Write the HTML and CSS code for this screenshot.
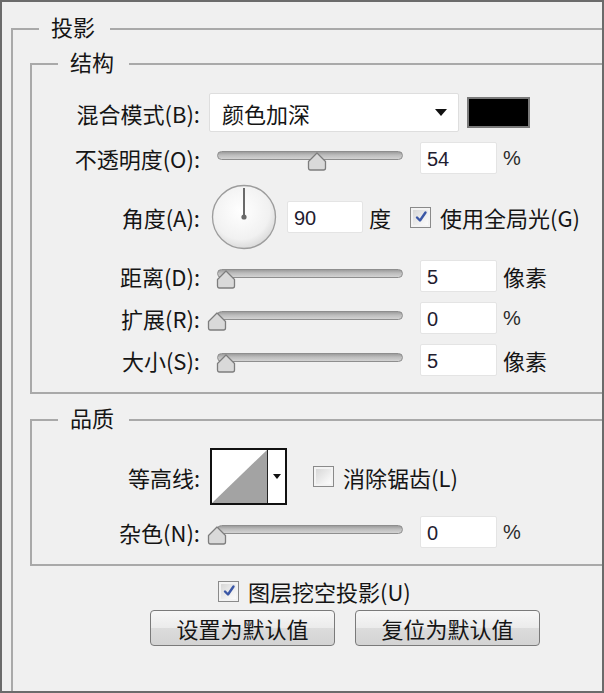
FILE: index.html
```html
<!DOCTYPE html>
<html lang="zh-CN">
<head>
  <meta charset="UTF-8" />
  <title>图层样式 - 投影</title>
  <link rel="stylesheet" href="styles.css">
</head>
<body>
  <div class="dialog">
    <fieldset class="group outer">
      <legend>投影</legend>

      <fieldset class="group">
        <legend>结构</legend>
        <div class="form structure">
          <label class="lbl">混合模式(B):</label>
          <div class="ctl">
            <div class="select"><span>颜色加深</span><i class="caret"></i></div>
            <div class="swatch"></div>
          </div>

          <label class="lbl">不透明度(O):</label>
          <div class="ctl">
            <div class="slider"><div class="track"></div><span class="thumb" style="left:54%"><svg viewBox="0 0 20 20"><path d="M1.5 10.5 L10 2 L18.5 10.5 V17 Q18.5 19 16.5 19 H3.5 Q1.5 19 1.5 17 Z"/></svg></span></div>
            <input class="num" type="text" value="54" readonly>
            <span class="unit pct">%</span>
          </div>

          <label class="lbl">角度(A):</label>
          <div class="ctl">
            <svg class="dial" viewBox="0 0 66 66">
              <defs>
                <radialGradient id="dialFill" cx="45%" cy="40%" r="65%">
                  <stop offset="0" stop-color="#ffffff"/>
                  <stop offset="0.7" stop-color="#f1f1f1"/>
                  <stop offset="1" stop-color="#d4d4d4"/>
                </radialGradient>
              </defs>
              <circle cx="33" cy="33" r="31.5" fill="url(#dialFill)" stroke="#9c9c9c" stroke-width="1.3"/>
              <line x1="33" y1="33" x2="33" y2="4" stroke="#6a6a6a" stroke-width="2"/>
              <circle cx="33" cy="33" r="2.6" fill="#6a6a6a"/>
            </svg>
            <input class="num angle" type="text" value="90" readonly>
            <span class="unit">度</span>
            <span class="check on"><svg viewBox="0 0 14 14"><path d="M3 7.5 L6 10.5 L11.5 2.5"/></svg></span>
            <span class="check-text">使用全局光(G)</span>
          </div>

          <label class="lbl">距离(D):</label>
          <div class="ctl">
            <div class="slider"><div class="track"></div><span class="thumb" style="left:5%"><svg viewBox="0 0 20 20"><path d="M1.5 10.5 L10 2 L18.5 10.5 V17 Q18.5 19 16.5 19 H3.5 Q1.5 19 1.5 17 Z"/></svg></span></div>
            <input class="num" type="text" value="5" readonly>
            <span class="unit">像素</span>
          </div>

          <label class="lbl">扩展(R):</label>
          <div class="ctl">
            <div class="slider"><div class="track"></div><span class="thumb" style="left:0%"><svg viewBox="0 0 20 20"><path d="M1.5 10.5 L10 2 L18.5 10.5 V17 Q18.5 19 16.5 19 H3.5 Q1.5 19 1.5 17 Z"/></svg></span></div>
            <input class="num" type="text" value="0" readonly>
            <span class="unit pct">%</span>
          </div>

          <label class="lbl">大小(S):</label>
          <div class="ctl">
            <div class="slider"><div class="track"></div><span class="thumb" style="left:5%"><svg viewBox="0 0 20 20"><path d="M1.5 10.5 L10 2 L18.5 10.5 V17 Q18.5 19 16.5 19 H3.5 Q1.5 19 1.5 17 Z"/></svg></span></div>
            <input class="num" type="text" value="5" readonly>
            <span class="unit">像素</span>
          </div>
        </div>
      </fieldset>

      <fieldset class="group quality">
        <legend>品质</legend>
        <div class="form">
          <label class="lbl">等高线:</label>
          <div class="ctl">
            <div class="contour">
              <svg class="curve" viewBox="0 0 55 53" preserveAspectRatio="none"><polygon points="0,53 55,0 55,53" fill="#a3a3a3"/></svg>
              <span class="contour-drop"><i class="caret small"></i></span>
            </div>
            <span class="check"></span>
            <span class="check-text">消除锯齿(L)</span>
          </div>

          <label class="lbl">杂色(N):</label>
          <div class="ctl">
            <div class="slider"><div class="track"></div><span class="thumb" style="left:0%"><svg viewBox="0 0 20 20"><path d="M1.5 10.5 L10 2 L18.5 10.5 V17 Q18.5 19 16.5 19 H3.5 Q1.5 19 1.5 17 Z"/></svg></span></div>
            <input class="num" type="text" value="0" readonly>
            <span class="unit pct">%</span>
          </div>
        </div>
      </fieldset>

      <div class="knockout">
        <span class="check on"><svg viewBox="0 0 14 14"><path d="M3 7.5 L6 10.5 L11.5 2.5"/></svg></span>
        <span class="check-text">图层挖空投影(U)</span>
      </div>

      <div class="actions">
        <button class="btn">设置为默认值</button>
        <button class="btn">复位为默认值</button>
      </div>
    </fieldset>
  </div>
</body>
</html>
```

FILE: styles.css
```css
:root {
  --bg: #f0f0f0;
  --frame: #6b6b6b;
  --rule: #a9a9a9;
  --text: #151515;
  --field-border: #dedede;
}

* {
  box-sizing: border-box;
}

body {
  margin: 0;
  background: var(--bg);
  font-family: "Noto Sans CJK SC", "Noto Sans", sans-serif;
  color: var(--text);
}

.dialog {
  width: 604px;
  height: 693px;
  border: 2px solid var(--frame);
  background: var(--bg);
  overflow: hidden;
}

/* group boxes: only top + left lines show, the rest runs off the crop */
.group {
  margin: 0;
  padding: 0;
  min-width: 0;
  border: none;
  border-top: 2px solid var(--rule);
  border-left: 2px solid var(--rule);
}

.group legend {
  padding: 0 15px 6px 12px;
  margin-left: 26px;
  font-size: 22px;
  line-height: 28px;
}

.outer {
  margin: 10px 0 0 9px;
  padding: 1px 0 80px 17px;
}

.outer > legend {
  margin-left: 9px;
}

.outer > .group {
  border-bottom: 2px solid var(--rule);
  padding: 12px 0 16px 0;
}

.outer > .quality {
  margin-top: 9px;
  padding: 11px 0 16px 0;
}

.form {
  display: grid;
  grid-template-columns: 168px 1fr;
  column-gap: 9px;
  row-gap: 10px;
  align-items: center;
}

.quality .form {
  row-gap: 11px;
}

.lbl {
  text-align: right;
  font-size: 22px;
  line-height: 28px;
  white-space: nowrap;
}

.ctl {
  display: flex;
  align-items: center;
}

/* blend mode dropdown */
.select {
  width: 250px;
  height: 39px;
  background: #fff;
  border: 1px solid var(--field-border);
  border-radius: 2px;
  display: flex;
  align-items: center;
  padding: 0 11px 0 12px;
  font-size: 22px;
}

.select span {
  flex: 1;
}

.caret {
  width: 0;
  height: 0;
  border-left: 6px solid transparent;
  border-right: 6px solid transparent;
  border-top: 7px solid #111;
}

.caret.small {
  border-left-width: 4px;
  border-right-width: 4px;
  border-top-width: 5px;
}

.swatch {
  width: 63px;
  height: 31px;
  margin-left: 8px;
  background: #000;
  border: 2px solid #7a7a7a;
}

/* sliders */
.slider {
  position: relative;
  flex: none;
  width: 186px;
  height: 20px;
  margin: 5px 0 0 8px;
}

.track {
  height: 9px;
  border: 1px solid #8e8e8e;
  border-radius: 5px;
  background: linear-gradient(#9c9c9c, #bdbdbd 45%, #d3d3d3);
}

.thumb {
  position: absolute;
  top: 0;
  width: 20px;
  height: 20px;
  margin-left: -10px;
}

.thumb svg {
  display: block;
  width: 20px;
  height: 20px;
}

.thumb path {
  fill: #d9d9d9;
  stroke: #7d7d7d;
  stroke-width: 1.3;
  stroke-linejoin: round;
}

.num {
  width: 77px;
  height: 32px;
  margin: 0 0 0 17px;
  padding: 2px 0 0 6px;
  background: #fff;
  border: 1px solid #e4e4e4;
  border-radius: 2px;
  font-family: "Liberation Sans", Arial, sans-serif;
  font-size: 20px;
  color: #1f2030;
  outline: none;
}

.num.angle {
  width: 76px;
  margin-left: 10px;
}

.unit {
  margin-left: 6px;
  font-size: 22px;
}

.unit.pct {
  font-family: "Liberation Sans", Arial, sans-serif;
  font-size: 20px;
  color: #2a2a2a;
}

.dial {
  width: 66px;
  height: 66px;
  margin-left: 2px;
  flex: none;
}

/* checkboxes */
.check {
  width: 21px;
  height: 21px;
  flex: none;
  margin-left: 19px;
  border: 1px solid #8a8a8a;
  background: linear-gradient(135deg, #d2d2d2, #f4f4f4 70%, #fff);
  box-shadow: inset 0 0 0 2px #f3f3f3;
  display: flex;
  align-items: center;
  justify-content: center;
}

.check svg {
  width: 14px;
  height: 14px;
}

.check path {
  fill: none;
  stroke: #3b57a6;
  stroke-width: 2.4;
  stroke-linecap: round;
  stroke-linejoin: round;
}

.check-text {
  margin-left: 9px;
  font-size: 22px;
  white-space: nowrap;
}

/* contour picker */
.contour {
  display: flex;
  width: 77px;
  height: 57px;
  margin-left: 1px;
  border: 2px solid #111;
  background: #fff;
}

.curve {
  width: 55px;
  height: 53px;
  display: block;
}

.contour-drop {
  flex: 1;
  border-left: 1px solid #222;
  display: flex;
  align-items: center;
  justify-content: center;
}

.quality .check {
  margin-left: 26px;
}

/* bottom */
.knockout {
  display: flex;
  align-items: center;
  height: 22px;
  margin-top: 14px;
  padding-left: 188px;
}

.knockout .check {
  margin-left: 0;
}

.actions {
  display: flex;
  gap: 20px;
  margin-top: 8px;
  padding-left: 120px;
}

.btn {
  width: 185px;
  height: 36px;
  padding: 0;
  border: 1px solid #7a7a7a;
  border-radius: 4px;
  background: linear-gradient(#f7f7f7, #ebebeb 50%, #dcdcdc 51%, #d3d3d3);
  font-family: "Noto Sans CJK SC", sans-serif;
  font-size: 22px;
  color: var(--text);
}
```
